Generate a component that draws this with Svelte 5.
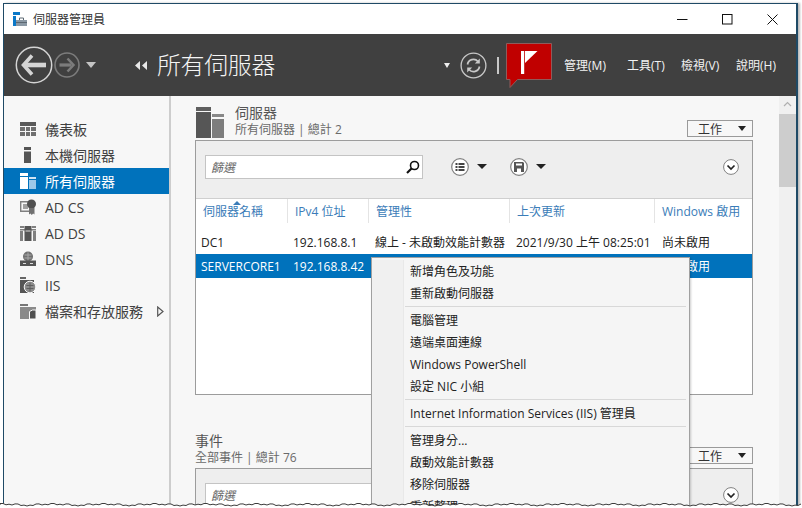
<script>
  const nav = [
    { label: '儀表板', icon: 'dash' },
    { label: '本機伺服器', icon: 'local' },
    { label: '所有伺服器', icon: 'all', active: true },
    { label: 'AD CS', icon: 'adcs' },
    { label: 'AD DS', icon: 'adds' },
    { label: 'DNS', icon: 'dns' },
    { label: 'IIS', icon: 'iis' },
    { label: '檔案和存放服務', icon: 'file', more: true }
  ];
  const menus = ['管理(M)', '工具(T)', '檢視(V)', '說明(H)'];
  const columns = ['伺服器名稱', 'IPv4 位址', '管理性', '上次更新', 'Windows 啟用'];
  const groups = [
    ['新增角色及功能', '重新啟動伺服器'],
    ['電腦管理', '遠端桌面連線', 'Windows PowerShell', '設定 NIC 小組'],
    ['Internet Information Services (IIS) 管理員'],
    ['管理身分...', '啟動效能計數器', '移除伺服器', '重新整理']
  ];
  // jagged torn edge, generated deterministically
  let tear = 'M0 9';
  for (let x = 0; x <= 802; x += 3) {
    const y = 7.5 + ((x * x * 7 + x * 13) % 17) / 5.5;
    tear += ` L${x} ${y.toFixed(1)}`;
  }
  const tearFill = tear + ' L802 12 L0 12 Z';
</script>

<div class="page">
  <div class="win">
    <div class="titlebar">
      <svg class="appicon" width="14" height="14" viewBox="0 0 14 14">
        <path d="M0 0h7v3H0z" fill="#0a78c8"/><path d="M0 4h3v10H0z" fill="#0a78c8"/>
        <path d="M3 8h11v6H3z" fill="#8a98a4"/><path d="M3 10.500h11M6.500 8V6h4v2" stroke="#5c6872" stroke-width="1" fill="none"/>
      </svg>
      <span class="wintitle">伺服器管理員</span>
      <div class="winbtns">
        <span class="wb"><svg width="11" height="11" viewBox="0 0 11 11"><path d="M0 5.500h10.500" stroke="#111"/></svg></span>
        <span class="wb"><svg width="11" height="11" viewBox="0 0 11 11"><rect x=".5" y=".5" width="9.500" height="9.500" fill="none" stroke="#111"/></svg></span>
        <span class="wb"><svg width="11" height="11" viewBox="0 0 11 11"><path d="M.5.500l10 10M10.500.500l-10 10" stroke="#111" fill="none"/></svg></span>
      </div>
    </div>

    <header class="header">
      <svg class="back" width="38" height="38" viewBox="0 0 38 38">
        <circle cx="19" cy="19" r="17.700" fill="none" stroke="#d4d4d4" stroke-width="1.500"/>
        <path d="M17 9.500L8.500 19l8.500 9.500" fill="none" stroke="#d4d4d4" stroke-width="3.600"/>
        <path d="M10 19h21" stroke="#d4d4d4" stroke-width="4.600"/>
      </svg>
      <svg class="fwd" width="26" height="26" viewBox="0 0 26 26">
        <circle cx="13" cy="13" r="12" fill="none" stroke="#7c7c7c" stroke-width="1.600"/>
        <path d="M13.500 6.500l6 6.500-6 6.500" fill="none" stroke="#7c7c7c" stroke-width="2.500"/>
        <path d="M5.500 13h12" stroke="#7c7c7c" stroke-width="3.200"/>
      </svg>
      <span class="tri small"></span>
      <svg class="crumb" width="13" height="9" viewBox="0 0 13 9"><path d="M5 0v9L0 4.500zM12 0v9L7 4.500z" fill="#e8e8e8"/></svg>
      <span class="pagetitle">所有伺服器</span>
      <span class="tri tiny"></span>
      <svg class="refresh" width="27" height="27" viewBox="0 0 27 27">
        <circle cx="13.500" cy="13.500" r="12.400" fill="none" stroke="#c8c8c8" stroke-width="1.300"/>
        <path d="M7.500 12.500a6 6 0 0 1 10.500-3M19.500 14.500a6 6 0 0 1-10.500 3" fill="none" stroke="#c8c8c8" stroke-width="1.700"/>
        <path d="M19.800 6.500v5h-5zM7.200 20.500v-5h5z" fill="#c8c8c8"/>
      </svg>
      <span class="vsep"></span>
      <svg class="flag" width="47" height="46" viewBox="0 0 47 46">
        <path d="M.5.500h45v36H11.500L4 44.500v-8H.5z" fill="#c00000" stroke="#8f5b5b"/>
        <path d="M15 8h3.200v23H15z" fill="#fff"/>
        <path d="M19 8h12.500L19 20z" fill="#fff"/>
      </svg>
      <nav class="menus">
        {#each menus as m}<span>{m}</span>{/each}
      </nav>
    </header>

    <div class="body">
      <aside class="side">
        {#each nav as n}
          <div class="navitem" class:active={n.active}>
            <svg class="navicon" width="16" height="16" viewBox="0 0 16 16">
              {#if n.icon === 'dash'}
                <path d="M0 1h16v4H0z" fill="#5a5a5a"/><path d="M0 6h5v4H0zM6 6h4v4H6zM11 6h5v4h-5zM0 11h5v4H0zM6 11h4v4H6zM11 11h5v4h-5z" fill="#707070"/>
              {:else if n.icon === 'local'}
                <path d="M4 0h7v3H4z" fill="#555"/><path d="M4 4.500h7V16H4z" fill="#555"/>
              {:else if n.icon === 'all'}
                <path d="M0 0h8v3H0zM0 4h8v12H0z" fill="#fff"/><path d="M9 4h7v2H9z" fill="#cfe3f3"/><path d="M9 7h7v9H9z" fill="#9cc8e8"/>
              {:else if n.icon === 'adcs'}
                <path d="M.7 2.700h10v9.600h-10z" fill="none" stroke="#808080" stroke-width="1.400"/><path d="M3 5h5v5H3z" fill="#a0a0a0"/><circle cx="11.500" cy="5" r="4.500" fill="#505050"/><path d="M9 9h5.500v6.500l-1.400-1-1.300 1.500-1.400-1.500-1.400 1z" fill="#707070"/>
              {:else if n.icon === 'adds'}
                <path d="M0 1h4v2H0zM12 1h4v2h-4zM0 4h16v1.500H0z" fill="#808080"/><path d="M0 6h3v10H0zM13 6h3v10h-3z" fill="#808080"/><path d="M4.500 1h7v15h-7z" fill="#555"/><path d="M5.500 6h5" stroke="#ddd"/>
              {:else if n.icon === 'dns'}
                <circle cx="8" cy="5.500" r="5" fill="#707070"/><path d="M4.500 4h7M4.500 7h7M8 1.500v8" stroke="#a8a8a8"/><path d="M0 9.500h16V15H0z" fill="#555"/><path d="M3 12.500h3M10 12.500h3" stroke="#ddd"/>
              {:else if n.icon === 'iis'}
                <path d="M0 0h6v2H0z" fill="#666"/><path d="M0 3h14v13H0z" fill="#555"/><circle cx="10" cy="10" r="5.800" fill="#8c8c8c" stroke="#f7f7f7"/><path d="M6.500 8.500h7M6.500 11.500h7M10 5.500v9" stroke="#5f5f5f"/>
              {:else}
                <path d="M0 1h8v2H0z" fill="#777"/><path d="M0 4h16v12H0z" fill="#8a8a8a"/><path d="M9.500 8.500l3-1.500h3.500v9H9.500z" fill="#4f4f4f" stroke="#f7f7f7"/>
              {/if}
            </svg>
            <span class="navlabel">{n.label}</span>
            {#if n.more}
              <svg class="chev" width="7" height="11" viewBox="0 0 7 11"><path d="M.7 1v9l5.300-4.500z" fill="none" stroke="#555" stroke-width="1.200"/></svg>
            {/if}
          </div>
        {/each}
      </aside>

      <main class="main">
        <section class="panel first">
          <div class="sechead">
            <svg class="secicon" width="29" height="31" viewBox="0 0 29 31">
              <path d="M0 0h15v4H0z" fill="#5f5f5f"/><path d="M0 5h15v26H0z" fill="#565656"/>
              <path d="M16 7h12v3H16z" fill="#888"/><path d="M16 12h12v19H16z" fill="#7d7d7d"/>
            </svg>
            <div class="sectext">
              <div class="sectitle">伺服器</div>
              <div class="secsub">所有伺服器 | 總計 2</div>
            </div>
            <button class="tasks"><span>工作</span><i class="tri dark"></i></button>
          </div>
          <div class="box">
            <div class="toolbar">
              <div class="filter">
                <em>篩選</em>
                <svg width="14" height="14" viewBox="0 0 14 14"><circle cx="8.500" cy="5.500" r="4" fill="none" stroke="#111" stroke-width="1.600"/><path d="M5.500 8.500L1 13" stroke="#111" stroke-width="2.200"/></svg>
              </div>
              <span class="tool">
                <svg width="18" height="18" viewBox="0 0 18 18"><circle cx="9" cy="9" r="8.300" fill="#fff" stroke="#808080" stroke-width="1.200"/><path d="M7.500 6h6M7.500 9h6M7.500 12h6M4.500 6h2M4.500 9h2M4.500 12h2" stroke="#444" stroke-width="1.800"/></svg>
                <i class="tri dark"></i>
              </span>
              <span class="tool">
                <svg width="18" height="18" viewBox="0 0 18 18"><circle cx="9" cy="9" r="8.300" fill="#fff" stroke="#808080" stroke-width="1.200"/><path d="M4 4h9l1 1v9H4z" fill="#555"/><path d="M6 5.500h6v2H6z" fill="#fff"/><path d="M7 10.500h4V14H7z" fill="#fff"/></svg>
                <i class="tri dark"></i>
              </span>
              <svg class="expand" width="16" height="16" viewBox="0 0 16 16"><circle cx="8" cy="8" r="7.400" fill="#fff" stroke="#808080"/><path d="M4.500 6.500L8 10l3.500-3.500" fill="none" stroke="#222" stroke-width="1.700"/></svg>
            </div>
            <div class="thead">
              {#each columns as c, i}
                <span class="th c{i}">{c}{#if i === 0}<i class="sort"></i>{/if}</span>
              {/each}
            </div>
            <div class="row">
              <span class="c0">DC1</span><span class="c1">192.168.8.1</span><span class="c2">線上 - 未啟動效能計數器</span><span class="c3">2021/9/30 上午 08:25:01</span><span class="c4">尚未啟用</span>
            </div>
            <div class="row sel">
              <span class="c0">SERVERCORE1</span><span class="c1">192.168.8.42</span><span class="c2"></span><span class="c3"></span><span class="c4">尚未啟用</span>
            </div>
            <div class="blank"></div>
          </div>
        </section>

        <section class="panel">
          <div class="sechead second">
            <div class="sectext">
              <div class="sectitle">事件</div>
              <div class="secsub">全部事件 | 總計 76</div>
            </div>
            <button class="tasks"><span>工作</span><i class="tri dark"></i></button>
          </div>
          <div class="box short">
            <div class="toolbar lower">
              <div class="filter"><em>篩選</em></div>
              <svg class="expand" width="16" height="16" viewBox="0 0 16 16"><circle cx="8" cy="8" r="7.400" fill="#fff" stroke="#808080"/><path d="M4.500 6.500L8 10l3.500-3.500" fill="none" stroke="#222" stroke-width="1.700"/></svg>
            </div>
          </div>
        </section>
      </main>

      <div class="scroll">
        <svg class="up" width="9" height="6" viewBox="0 0 9 6"><path d="M1 5l3.500-3.500L8 5" fill="none" stroke="#b0b0b0" stroke-width="1.200"/></svg>
        <div class="thumb"></div>
      </div>
    </div>

    <div class="ctx">
      {#each groups as g, gi}
        {#if gi > 0}<div class="ctxsep"></div>{/if}
        {#each g as item}<div class="ctxitem">{item}</div>{/each}
      {/each}
    </div>
  </div>

  <svg class="tear" width="802" height="12" viewBox="0 0 802 12">
    <path d={tearFill} fill="#fff"/>
    <path d={tear} fill="none" stroke="#3c3c3c" stroke-width="1"/>
  </svg>
</div>

<style>
  :global(body) { margin: 0; background: #fff; }
  .page {
    position: relative; width: 802px; height: 508px; overflow: hidden; background: #fff;
    padding: 3px 4px 0 3px; box-sizing: border-box;
    font-family: "Open Sans", "Noto Sans CJK TC", sans-serif; font-size: 12px; color: #222;
  }
  .win {
    position: relative; height: 520px; border: 1px solid #1f4a66; box-sizing: border-box;
    border-right-width: 2px; display: flex; flex-direction: column; box-shadow: 2px 0 2px #bbb; background: #fff;
  }
  .titlebar { height: 30px; display: flex; align-items: center; padding-left: 9px; flex: none; }
  .wintitle { margin-left: 6px; font-size: 12px; color: #333; }
  .winbtns { margin-left: auto; display: flex; margin-right: 1px; }
  .wb { width: 45px; height: 30px; display: flex; align-items: center; justify-content: center; }

  .header { height: 62px; background: #404040; display: flex; align-items: center; flex: none; color: #fff; }
  .back { margin-left: 11px; }
  .fwd { margin-left: 1px; }
  .tri { display: inline-block; width: 0; height: 0; border-style: solid; border-color: transparent; }
  .tri.small { margin-left: 6px; border-width: 6px 5.500px 0; border-top-color: #c4c4c4; }
  .crumb { margin-left: 39px; }
  .pagetitle { margin-left: 9px; font-size: 24px; font-weight: 300; color: #f4f4f4; line-height: 30px; letter-spacing: -0.4px; }
  .tri.tiny { margin-left: auto; border-width: 5px 3.500px 0; border-top-color: #eee; }
  .refresh { margin-left: 10px; }
  .vsep { width: 2px; height: 17px; background: #c8c8c8; margin-left: 10px; }
  .flag { margin-left: 7px; margin-top: 2px; }
  .menus { display: flex; margin-left: 11px; font-size: 12px; color: #f2f2f2; margin-right: 20px; }
  .menus span:nth-child(1) { width: 63px; }
  .menus span:nth-child(2) { width: 54px; }
  .menus span:nth-child(3) { width: 55px; }

  .body { flex: 1; display: flex; min-height: 0; background: #f7f7f7; }
  .side { width: 165px; flex: none; padding-top: 20px; box-sizing: content-box; border-right: 2px solid #cdcdcd; background: #f7f7f7; }
  .navitem { height: 26px; display: flex; align-items: center; padding-left: 16px; color: #404040; font-size: 14px; }
  .navitem.active { background: #0072bc; color: #fff; }
  .navlabel { margin-left: 9px; }
  .chev { margin-left: auto; margin-right: 5px; }

  .main { flex: 1; min-width: 0; padding: 0 26px 0 24px; }
  .panel.first { padding-top: 9px; }
  .sechead { display: flex; align-items: flex-start; height: 35px; }
  .secicon { flex: none; margin-top: 2px; margin-left: 1px; }
  .sectext { margin-left: 10px; }
  .sectitle { font-size: 14px; color: #555; line-height: 16px; margin-bottom: 1px; }
  .secsub { font-size: 12px; color: #6a6a6a; line-height: 16px; }
  .tasks {
    margin-left: auto; margin-top: 15px; width: 66px; height: 17px; padding: 0 6px 0 10px; box-sizing: border-box;
    display: flex; align-items: center; justify-content: space-between;
    background: #f7f7f7; border: 1px solid #9a9a9a; font: inherit; font-size: 12px; color: #333;
  }
  .tri.dark { border-width: 5px 4.500px 0; border-top-color: #222; }
  .box { border: 1px solid #9c9c9c; background: #fff; height: 255px; box-sizing: border-box; display: flex; flex-direction: column; }
  .toolbar { height: 58px; flex: none; background: #eeeeee; border-bottom: 1px solid #cfcfcf; display: flex; align-items: center; padding: 0 13px 6px 9px; box-sizing: border-box; }
  .filter { width: 218px; height: 24px; background: #fff; border: 1px solid #c4c4c4; box-sizing: border-box; display: flex; align-items: center; justify-content: space-between; padding: 0 2px 0 5px; }
  .filter em { color: #666; font-style: italic; font-size: 12px; }
  .tool { display: inline-flex; align-items: center; gap: 8px; }
  .tool:nth-child(2) { margin-left: 28px; }
  .tool:nth-child(3) { margin-left: 23px; }
  .expand { margin-left: auto; }
  .toolbar .tri.dark { border-width: 5.500px 5.500px 0; }
  .thead { display: flex; height: 24px; flex: none; align-items: center; color: #3a7cb8; font-size: 12px; }
  .th { position: relative; height: 100%; display: flex; align-items: center; border-right: 1px solid #e4e4e4; box-sizing: border-box; padding-left: 7px; }
  .sort { position: absolute; left: 37px; top: 2px; width: 0; height: 0; border-style: solid; border-width: 0 4px 4px; border-color: transparent transparent #3a7cb8; }
  .c0 { width: 92px; flex: none; }
  .c1 { width: 81px; flex: none; }
  .c2 { width: 141px; flex: none; }
  .c3 { width: 145px; flex: none; }
  .c4 { flex: 1; }
  .th.c4 { border-right: 0; }
  .row { display: flex; height: 24px; align-items: center; flex: none; color: #222; }
  .row span { padding-left: 5px; box-sizing: border-box; white-space: nowrap; overflow: hidden; }
  .row .c2, .row .c3 { padding-left: 6px; }
  .row .c4 { padding-left: 7px; }
  .thead + .row { margin-top: 7px; }
  .row.sel { background: #0072bc; color: #fff; }
  .blank { flex: 1; }
  .sechead.second { margin-top: 38px; }
  .second .sectext { margin-left: 0; }
  .second .tasks { margin-top: 14px; }
  .box.short { height: 120px; }
  .toolbar.lower { padding-bottom: 0; height: 40px; align-items: flex-start; padding-top: 14px; }
  .lower .expand { margin-top: 4px; }

  .scroll { width: 17px; flex: none; background: #f0f0f0; position: relative; }
  .up { display: block; margin: 5px auto 0; }
  .thumb { position: absolute; left: 0; right: 0; top: 18px; height: 73px; background: #cdcdcd; }

  .ctx {
    position: absolute; left: 367px; top: 253px; width: 319px; height: 270px; box-sizing: border-box;
    background: #f5f5f5; border: 1px solid #a0a0a0; padding: 3px 3px 0 33px; color: #222; font-size: 12px;
    box-shadow: 1px 1px 2px rgba(0,0,0,.2);
  }
  .ctx::before { content: ""; position: absolute; left: 0; top: 2px; bottom: 0; width: 31px; background: #f0f0f0; border-right: 1px solid #e8e8e8; }
  .ctxitem { height: 22px; line-height: 22px; padding-left: 5px; white-space: nowrap; }
  .ctxsep { height: 1px; background: #d8d8d8; margin: 1px 0 3px; }

  .tear { position: absolute; left: 0; bottom: 0; display: block; }
</style>
